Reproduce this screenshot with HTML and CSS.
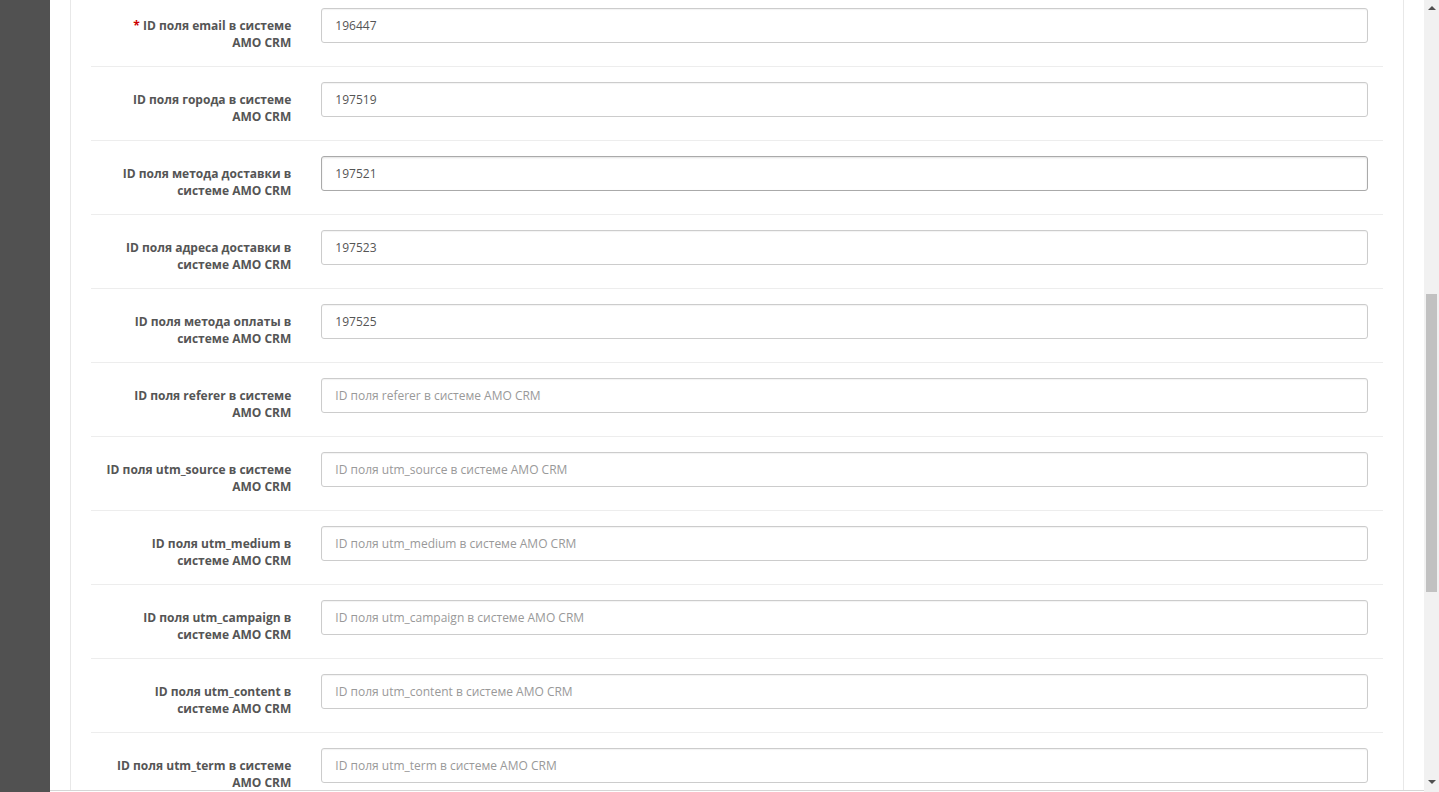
FILE: index.html
```html
<!DOCTYPE html>
<html lang="ru">
<head>
  <meta charset="UTF-8" />
  <title>AMO CRM settings</title>
  <link rel="stylesheet" href="styles.css">
</head>
<body>
  <div class="sidebar"></div>

  <div class="content">
    <div class="panel">
      <div class="panel-body">
        <div class="form-group required">
          <label class="control-label">ID поля email в системе AMO CRM</label>
          <div class="field"><input type="text" class="form-control" value="196447"></div>
        </div>
        <div class="form-group">
          <label class="control-label">ID поля города в системе AMO CRM</label>
          <div class="field"><input type="text" class="form-control" value="197519"></div>
        </div>
        <div class="form-group">
          <label class="control-label">ID поля метода доставки в системе AMO CRM</label>
          <div class="field"><input type="text" class="form-control hover" value="197521"></div>
        </div>
        <div class="form-group">
          <label class="control-label">ID поля адреса доставки в системе AMO CRM</label>
          <div class="field"><input type="text" class="form-control" value="197523"></div>
        </div>
        <div class="form-group">
          <label class="control-label">ID поля метода оплаты в системе AMO CRM</label>
          <div class="field"><input type="text" class="form-control" value="197525"></div>
        </div>
        <div class="form-group">
          <label class="control-label">ID поля referer в системе AMO CRM</label>
          <div class="field"><input type="text" class="form-control" placeholder="ID поля referer в системе AMO CRM"></div>
        </div>
        <div class="form-group">
          <label class="control-label">ID поля utm_source в системе AMO CRM</label>
          <div class="field"><input type="text" class="form-control" placeholder="ID поля utm_source в системе AMO CRM"></div>
        </div>
        <div class="form-group">
          <label class="control-label">ID поля utm_medium в системе AMO CRM</label>
          <div class="field"><input type="text" class="form-control" placeholder="ID поля utm_medium в системе AMO CRM"></div>
        </div>
        <div class="form-group">
          <label class="control-label">ID поля utm_campaign в системе AMO CRM</label>
          <div class="field"><input type="text" class="form-control" placeholder="ID поля utm_campaign в системе AMO CRM"></div>
        </div>
        <div class="form-group">
          <label class="control-label">ID поля utm_content в системе AMO CRM</label>
          <div class="field"><input type="text" class="form-control" placeholder="ID поля utm_content в системе AMO CRM"></div>
        </div>
        <div class="form-group">
          <label class="control-label">ID поля utm_term в системе AMO CRM</label>
          <div class="field"><input type="text" class="form-control" placeholder="ID поля utm_term в системе AMO CRM"></div>
        </div>
      </div>
    </div>
  </div>

  <!-- fake window scrollbar -->
  <div class="scrollbar">
    <span class="arrow up"></span>
    <span class="thumb"></span>
    <span class="arrow down"></span>
  </div>
  <div class="bottom-edge"></div>
</body>
</html>
```

FILE: styles.css
```css
html, body { height: 100%; overflow: hidden; }
body {
  margin: 0;
  display: flex;
  font-family: "Open Sans", sans-serif;
  font-size: 12px;
  color: #666;
  background: #fff;
}

.sidebar {
  width: 50px;
  flex: none;
  background: #515151;
}

.content {
  flex: 1;
  padding: 0 35px 0 20px;
}

.panel {
  border: 1px solid #e8e8e8;
  border-top: none;
  border-bottom: none;
  background: #fff;
  min-height: 100%;
}
.panel-body {
  padding: 0 20px;
  margin-top: -8px;
}

.form-group {
  display: grid;
  grid-template-columns: 16.66667% 1fr;
  padding: 15px 0;
  border-top: 1px solid #ededed;
}
.control-label {
  padding: 9px 15px 0;
  text-align: right;
  font-weight: bold;
  color: #555;
  line-height: 17px;
}
.required .control-label:before {
  content: '* ';
  color: #c00;
}
.field { padding: 0 15px; }

.form-control {
  display: block;
  box-sizing: border-box;
  width: 100%;
  height: 35px;
  padding: 8px 13px;
  font-family: inherit;
  font-size: 12px;
  color: #555;
  background: #fff;
  border: 1px solid #ccc;
  border-radius: 3px;
  box-shadow: inset 0 1px 1px rgba(0,0,0,0.05);
  outline: none;
}
.form-control::placeholder { color: #999; }
.form-control.hover {
  border-color: #aaa;
  box-shadow: inset 0 1px 2px rgba(0,0,0,0.12);
}

.scrollbar {
  position: fixed;
  top: 0; right: 0; bottom: 0;
  width: 15px;
  background: #f1f1f1;
}
.scrollbar .thumb {
  position: absolute;
  left: 2px; right: 2px;
  top: 294px;
  height: 298px;
  background: #c1c1c1;
}
.scrollbar .arrow {
  position: absolute;
  left: 4px;
  width: 0; height: 0;
  border-left: 4px solid transparent;
  border-right: 4px solid transparent;
}
.scrollbar .up { top: 6px; border-bottom: 4px solid #505050; }
.scrollbar .down { bottom: 8px; border-top: 4px solid #505050; }

.bottom-edge {
  position: fixed;
  left: 50px; right: 15px; bottom: 0;
  height: 1px;
  border-top: 1px solid #d6d6d6;
  background: #fff;
}
```
